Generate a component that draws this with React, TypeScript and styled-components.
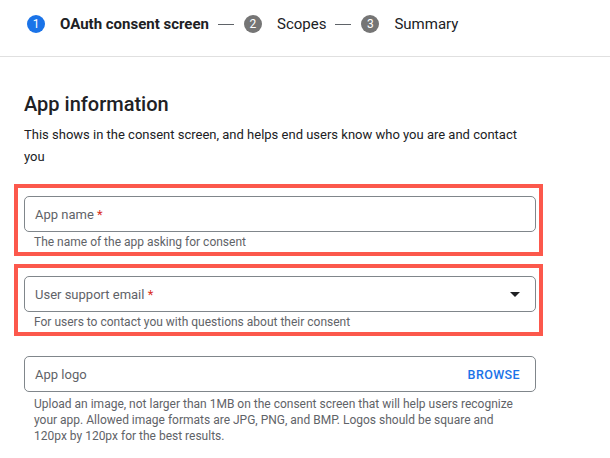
import React from 'react';
import styled, { createGlobalStyle } from 'styled-components';

const GlobalStyle = createGlobalStyle`
    body {
        margin: 0;
        background: #ffffff;
        font-family: Roboto, 'Liberation Sans', Arial, sans-serif;
        color: #202124;
    }
`;

const STEPS = [
    { n: 1, label: 'OAuth consent screen' },
    { n: 2, label: 'Scopes' },
    { n: 3, label: 'Summary' },
];

const App: React.FC = () => {
    return (
        <>
            <GlobalStyle />
            <Stepper>
                {STEPS.map((step, i) => (
                    <React.Fragment key={step.n}>
                        {i > 0 && <StepDash />}
                        <Step>
                            <StepCircle active={i === 0}>{step.n}</StepCircle>
                            <StepLabel active={i === 0}>{step.label}</StepLabel>
                        </Step>
                    </React.Fragment>
                ))}
            </Stepper>
            <Main>
                <Heading>App information</Heading>
                <Description>
                    This shows in the consent screen, and helps end users know who you are and contact you
                </Description>
                <Fields>
                    <Field highlighted>
                        <InputBox>
                            <Placeholder>
                                App name <Required>*</Required>
                            </Placeholder>
                        </InputBox>
                        <Helper>The name of the app asking for consent</Helper>
                    </Field>
                    <Field highlighted>
                        <InputBox>
                            <Placeholder>
                                User support email <Required>*</Required>
                            </Placeholder>
                            <DropArrow viewBox="0 0 10 5">
                                <path d="M0 0h10L5 5z" fill="#202124" />
                            </DropArrow>
                        </InputBox>
                        <Helper>For users to contact you with questions about their consent</Helper>
                    </Field>
                    <Field>
                        <InputBox>
                            <Placeholder>App logo</Placeholder>
                            <BrowseButton>BROWSE</BrowseButton>
                        </InputBox>
                        <Helper spaced>
                            Upload an image, not larger than 1MB on the consent screen that will help users recognize
                            your app. Allowed image formats are JPG, PNG, and BMP. Logos should be square and 120px by
                            120px for the best results.
                        </Helper>
                    </Field>
                </Fields>
            </Main>
        </>
    );
};

const Stepper = styled.div`
    display: flex;
    align-items: center;
    height: 48px;
    padding: 0 0 8px 27px;
    border-bottom: 1px solid #e0e0e0;
`;

const Step = styled.div`
    display: flex;
    align-items: center;
`;

const StepCircle = styled.div<{ active: boolean }>`
    width: 18px;
    height: 18px;
    border-radius: 50%;
    background: ${(props) => (props.active ? '#1a73e8' : '#757575')};
    color: #ffffff;
    font-size: 12px;
    display: flex;
    align-items: center;
    justify-content: center;
    margin-right: 15px;
`;

const StepLabel = styled.span<{ active: boolean }>`
    font-size: 15px;
    font-weight: ${(props) => (props.active ? 700 : 400)};
    color: #202124;
`;

const StepDash = styled.div`
    width: 16px;
    height: 1px;
    background: #5f6368;
    margin: 0 10px 0 9px;
`;

const Main = styled.div`
    padding: 33px 74px 0 24px;
`;

const Heading = styled.h2`
    margin: 0;
    font-size: 20px;
    line-height: 28px;
    font-weight: 500;
    color: #202124;
`;

const Description = styled.p`
    margin: 6px 0 0;
    max-width: 500px;
    font-size: 13px;
    line-height: 22px;
    color: #202124;
`;

const Fields = styled.div`
    display: flex;
    flex-direction: column;
    gap: 8px;
    margin-top: 16px;
`;

const Field = styled.div<{ highlighted?: boolean }>`
    margin: 0 -7px 0 -10px;
    border: 4px solid ${(props) => (props.highlighted ? '#fc584c' : 'transparent')};
    padding: 8px 3px 2px 6px;
`;

const InputBox = styled.div`
    height: 36px;
    box-sizing: border-box;
    border: 1px solid #80868b;
    border-radius: 5px;
    display: flex;
    align-items: center;
    justify-content: space-between;
    padding: 0 15px 0 10px;
`;

const Placeholder = styled.span`
    font-size: 13px;
    color: #5f6368;
`;

const Required = styled.span`
    color: #d93025;
`;

const DropArrow = styled.svg`
    width: 10px;
    height: 5px;
`;

const BrowseButton = styled.span`
    font-size: 12.5px;
    font-weight: 500;
    letter-spacing: 0.4px;
    color: #1a73e8;
`;

const Helper = styled.div<{ spaced?: boolean }>`
    margin-top: ${(props) => (props.spaced ? '4px' : '2px')};
    padding: 0 14px 0 10px;
    font-size: 12px;
    line-height: 16px;
    color: #5f6368;
`;

export default App;
